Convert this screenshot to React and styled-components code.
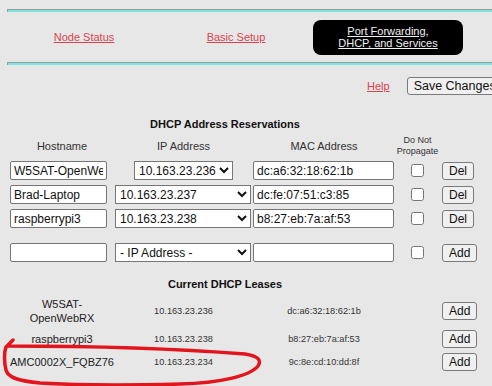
import React from "react";
import styled, { createGlobalStyle, css } from "styled-components";

const Global = createGlobalStyle`
  html, body { margin: 0; padding: 0; overflow: hidden; background: #e7e7e7; }
  body { font-family: "Liberation Sans", Arial, sans-serif; color: #222; }
`;

const Page = styled.div`
  position: relative;
  width: 700px;
  height: 386px;
  padding: 9px 0 0 7px;
  box-sizing: border-box;
`;

const NavRule = styled.div`
  height: 3px;
  box-sizing: border-box;
  border-top: 1px solid #9a9a9a;
  border-left: 1px solid #9a9a9a;
  background: #7be5df;
`;

const NavRow = styled.div`
  display: grid;
  grid-template-columns: repeat(3, 152px);
  height: 50px;
  padding-left: 1px;
  align-items: center;
  justify-items: center;
`;

const NavLink = styled.a`
  font-size: 11px;
  line-height: 13px;
  color: #d9434e;
  text-decoration: underline;
  text-align: center;
`;

const NavPill = styled.div`
  width: 150px;
  height: 35px;
  border-radius: 8px;
  background: #000;
  display: flex;
  align-items: center;
  justify-content: center;
`;

const PillLink = styled(NavLink)`
  color: #f2f2f2;
  line-height: 12.5px;
`;

const ToolRow = styled.div`
  display: flex;
  align-items: center;
  gap: 17px;
  margin-top: 12px;
  padding-left: 360px;
  height: 18px;
`;

const HelpLink = styled.a`
  font-size: 11px;
  color: #d9434e;
  text-decoration: underline;
`;

const Button = styled.button`
  font-family: "Liberation Sans", Arial, sans-serif;
  font-size: ${(p) => (p.$big ? "12.5px" : "12px")};
  line-height: 14px;
  height: ${(p) => (p.$big ? "18px" : "18px")};
  padding: 0 6px;
  box-sizing: border-box;
  background: #f0f0f0;
  color: #111;
  border: 1px solid #7a7a7a;
  border-radius: 3px;
  white-space: nowrap;
  justify-self: start;
  margin-left: ${(p) => (p.$big ? "0" : "2px")};
`;

const columns = css`
  display: grid;
  grid-template-columns: 104px 139px 142px 45px 60px;
  margin-left: 3px;
  align-items: center;
`;

const Row = styled.div`
  ${columns};
  margin-top: ${(p) => p.$top}px;
  height: ${(p) => p.$h || 19}px;
`;

const Title = styled.div`
  grid-column: 1 / 5;
  text-align: center;
  font-weight: bold;
  font-size: 11px;
  line-height: 13px;
  color: #111;
`;

const Head = styled.div`
  text-align: center;
  font-size: ${(p) => (p.$small ? "9px" : "11px")};
  line-height: ${(p) => (p.$small ? "11px" : "13px")};
  color: #333;
`;

const TextInput = styled.input`
  font-family: "Liberation Sans", Arial, sans-serif;
  font-size: 12px;
  height: 19px;
  width: ${(p) => p.$w}px;
  box-sizing: border-box;
  padding: 0 3px;
  margin: 0;
  border: 1px solid #767676;
  border-radius: 2px;
  background: #fff;
  color: #111;
  justify-self: start;
`;

const Select = styled.select`
  font-family: "Liberation Sans", Arial, sans-serif;
  font-size: 12px;
  height: 19px;
  margin: 0;
  color: #111;
  background: #fff;
  ${(p) =>
    p.$auto
      ? css`
          justify-self: center;
        `
      : css`
          width: 136px;
          justify-self: start;
          margin-left: 1px;
        `}
`;

const Check = styled.input`
  margin: 0;
  width: 13px;
  height: 13px;
  justify-self: center;
`;

const Cell = styled.div`
  text-align: center;
  font-size: ${(p) => (p.$small ? "9.2px" : "11px")};
  line-height: ${(p) => (p.$small ? "12px" : "14px")};
  color: ${(p) => (p.$small ? "#333" : "#222")};
`;

const Scribble = styled.svg`
  position: absolute;
  left: 0;
  top: 0;
  pointer-events: none;
`;

const reservations = [
  { host: "W5SAT-OpenWebRX", ip: "10.163.23.236", mac: "dc:a6:32:18:62:1b", auto: true },
  { host: "Brad-Laptop", ip: "10.163.23.237", mac: "dc:fe:07:51:c3:85" },
  { host: "raspberrypi3", ip: "10.163.23.238", mac: "b8:27:eb:7a:af:53" },
];

const leases = [
  { host: ["W5SAT-", "OpenWebRX"], ip: "10.163.23.236", mac: "dc:a6:32:18:62:1b", h: 29, top: 5 },
  { host: ["raspberrypi3"], ip: "10.163.23.238", mac: "b8:27:eb:7a:af:53", h: 19, top: 4 },
  { host: ["AMC0002X_FQBZ76"], ip: "10.163.23.234", mac: "9c:8e:cd:10:dd:8f", h: 19, top: 4 },
];

export default function App() {
  return (
    <Page>
      <Global />
      <NavRule />
      <NavRow>
        <NavLink href="#">Node Status</NavLink>
        <NavLink href="#">Basic Setup</NavLink>
        <NavPill>
          <PillLink href="#">
            Port Forwarding,
            <br />
            DHCP, and Services
          </PillLink>
        </NavPill>
      </NavRow>
      <NavRule />

      <ToolRow>
        <HelpLink href="#">Help</HelpLink>
        <Button $big>Save Changes</Button>
      </ToolRow>

      <Row $top={23} $h={13}>
        <Title>DHCP Address Reservations</Title>
      </Row>
      <Row $top={4} $h={22}>
        <Head>Hostname</Head>
        <Head>IP Address</Head>
        <Head>MAC Address</Head>
        <Head $small>
          Do Not
          <br />
          Propagate
        </Head>
      </Row>
      {reservations.map((r, i) => (
        <Row key={r.mac} $top={i === 0 ? 4 : 5}>
          <TextInput $w={97} defaultValue={r.host} />
          <Select $auto={r.auto} defaultValue={r.ip}>
            <option>{r.ip}</option>
          </Select>
          <TextInput $w={141} defaultValue={r.mac} />
          <Check type="checkbox" />
          <Button>Del</Button>
        </Row>
      ))}
      <Row $top={15}>
        <TextInput $w={97} defaultValue="" />
        <Select defaultValue="">
          <option value="">- IP Address -</option>
        </Select>
        <TextInput $w={141} defaultValue="" />
        <Check type="checkbox" />
        <Button>Add</Button>
      </Row>

      <Row $top={16} $h={13}>
        <Title>Current DHCP Leases</Title>
      </Row>
      {leases.map((l) => (
        <Row key={l.mac} $top={l.top} $h={l.h}>
          <Cell>
            {l.host.map((t, j) => (
              <div key={j}>{t}</div>
            ))}
          </Cell>
          <Cell $small>{l.ip}</Cell>
          <Cell $small>{l.mac}</Cell>
          <div />
          <Button>Add</Button>
        </Row>
      ))}

      <Scribble width="492" height="386" viewBox="0 0 492 386">
        <path
          d="M 13 340 L 6 347 C 4 352 4 362 6 370 C 8 378 20 381 40 383 C 90 386 140 385 180 384 C 220 383 250 376 258 366 C 262 360 258 356 245 354 C 180 349 90 346 8 346"
          fill="none"
          stroke="#e3141c"
          strokeWidth="3.5"
          strokeLinecap="round"
          strokeLinejoin="round"
        />
      </Scribble>
    </Page>
  );
}
